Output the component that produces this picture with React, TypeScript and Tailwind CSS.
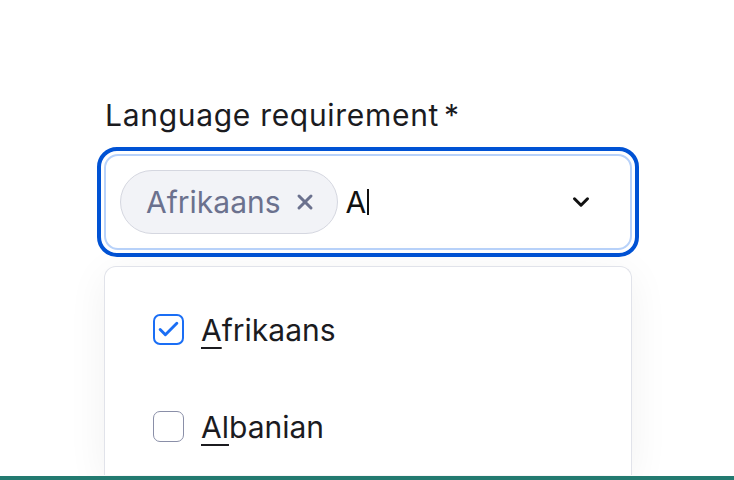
import { Check, ChevronDown, X } from 'lucide-react';

const options = [
  { label: 'Afrikaans', match: 'A', checked: true },
  { label: 'Albanian', match: 'Al', checked: false },
];

export default function App() {
  return (
    <div className="relative h-[480px] w-[734px] overflow-hidden bg-white font-['Inter',sans-serif] text-[#1b1b1f]">
      <div className="flex flex-col pl-[97px] pt-[96px]">
        <label className="ml-[8px] flex items-center gap-[5px] text-[30px] leading-[38px] tracking-[0.7px]">
          Language requirement<span>*</span>
        </label>

        <div className="mt-[13px] w-[542px] rounded-[20px] border-4 border-[#0052d4] p-[3px]">
          <div className="flex h-[96px] items-center rounded-[14px] border-2 border-[#b8d2fa] bg-white pl-[14px] pr-[36px]">
            <span className="flex h-[64px] items-center gap-[12px] rounded-full border border-[#d5d7e0] bg-[#f2f3f7] pl-[25px] pr-[20px] text-[30px] text-[#6b718e]">
              Afrikaans
              <X size={24} strokeWidth={3} />
            </span>
            <span className="ml-[8px] flex items-center text-[30px] text-[#111]">
              A<span className="ml-[1px] h-[26px] w-[1.5px] bg-[#111]" />
            </span>
            <ChevronDown className="ml-auto text-[#111]" size={26} strokeWidth={2.8} />
          </div>
        </div>

        <div className="ml-[7px] mt-[9px] w-[528px] rounded-t-[12px] border border-b-0 border-[#e1e3ea] bg-white pl-[48px] pt-[14px] shadow-[0_8px_40px_rgba(20,20,40,0.06)]">
          {options.map((o) => (
            <div key={o.label} className="flex items-center gap-[17px] py-[33px]">
              <span
                className={
                  o.checked
                    ? 'flex h-[31px] w-[31px] items-center justify-center rounded-[7px] border-2 border-[#1a6ef5] text-[#1a6ef5]'
                    : 'flex h-[31px] w-[31px] items-center justify-center rounded-[7px] border border-[#8a8fa8]'
                }
              >
                {o.checked && <Check size={25} strokeWidth={2.8} />}
              </span>
              <span className="text-[30px] leading-[30px] text-[#1b1b1f]">
                <span className="underline decoration-[1.5px] underline-offset-[6px]">{o.match}</span>
                {o.label.slice(o.match.length)}
              </span>
            </div>
          ))}
        </div>
      </div>

      <div className="absolute inset-x-0 bottom-0 h-[4px] bg-[#237a70]" />
    </div>
  );
}
